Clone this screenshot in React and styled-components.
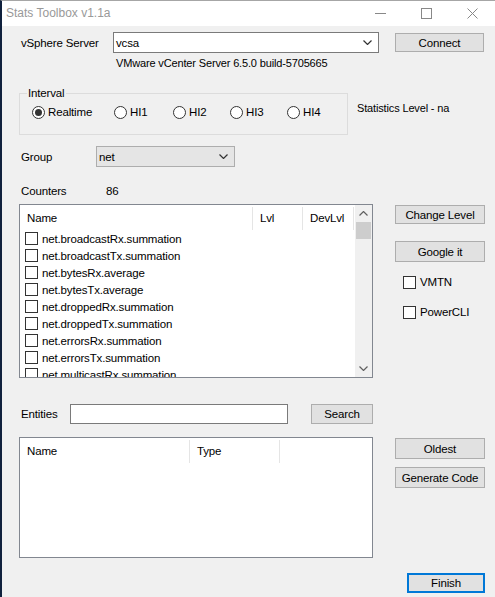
import React from "react";
import styled, { createGlobalStyle } from "styled-components";

const Global = createGlobalStyle`
  html, body { margin: 0; padding: 0; background: #f0f0f0; }
  body { font-family: "Liberation Sans", Arial, sans-serif; font-size: 11px; color: #000; }
  * { box-sizing: border-box; }
`;

const Window = styled.div`
  width: 495px;
  height: 597px;
  border-top: 1px solid #a6a6a6;
  border-left: 2px solid #10213d;
  background: #f0f0f0;
  display: flex;
  flex-direction: column;
  overflow: hidden;
  letter-spacing: -0.15px;
`;

const TitleBar = styled.div`
  height: 25px;
  background: #fff;
  display: flex;
  align-items: center;
  padding-left: 4px;
`;

const Title = styled.div`
  flex: 1;
  font-size: 12px;
  color: #999;
  letter-spacing: 0;
  padding-bottom: 1px;
`;

const WinBtn = styled.div`
  width: 46px;
  height: 25px;
  display: flex;
  align-items: center;
  justify-content: center;
`;

const Body = styled.div`
  flex: 1;
  display: flex;
  flex-direction: column;
  padding: 6px 10px 0 17px;
`;

const Row = styled.div`
  display: flex;
  align-items: ${(p) => p.$align || "center"};
  margin-top: ${(p) => p.$mt || 0}px;
`;

const Label = styled.div`
  width: ${(p) => p.$w}px;
  padding-left: 2px;
  line-height: 14px;
  flex-shrink: 0;
  font-size: 11.5px;
`;

const Combo = styled.div`
  width: ${(p) => p.$w}px;
  height: 21px;
  border: 1px solid ${(p) => (p.$flat ? "#adadad" : "#7a7a7a")};
  background: ${(p) => (p.$flat ? "#e5e5e5" : "#fff")};
  display: flex;
  align-items: center;
  padding: 0 6px 0 2px;
  font-size: 11.5px;
  flex-shrink: 0;
`;

const ComboText = styled.span`
  flex: 1;
`;

const TextBox = styled.div`
  width: ${(p) => p.$w}px;
  height: 20px;
  border: 1px solid #7a7a7a;
  background: #fff;
  flex-shrink: 0;
`;

const Button = styled.div`
  width: ${(p) => p.$w}px;
  height: ${(p) => p.$h || 20}px;
  margin-left: ${(p) => p.$ml || 0}px;
  margin-top: ${(p) => p.$mt || 0}px;
  background: #e1e1e1;
  border: ${(p) => (p.$default ? "2px solid #0078d7" : "1px solid #adadad")};
  display: flex;
  align-items: center;
  justify-content: center;
  font-size: 11.5px;
  flex-shrink: 0;
`;

const Version = styled.div`
  margin-top: 3px;
  padding-left: 97px;
  line-height: 14px;
  font-size: 11px;
`;

const GroupBox = styled.div`
  position: relative;
  width: 329px;
  height: 42px;
  border: 1px solid #dcdcdc;
  padding: 11px 0 0 12px;
  display: flex;
  align-items: flex-start;
`;

const GroupTitle = styled.div`
  position: absolute;
  top: -8px;
  left: 7px;
  padding: 0 1px;
  background: #f0f0f0;
  line-height: 14px;
  font-size: 11.5px;
`;

const Radio = styled.div`
  width: ${(p) => p.$w}px;
  height: 14px;
  display: flex;
  align-items: center;
  gap: 3px;
  line-height: 14px;
  font-size: 11.5px;
  flex-shrink: 0;
`;

const RadioCircle = styled.div`
  width: 13px;
  height: 13px;
  border-radius: 50%;
  border: 1px solid #333;
  background: #fff;
  display: flex;
  align-items: center;
  justify-content: center;
  &::after {
    content: "";
    display: ${(p) => (p.$checked ? "block" : "none")};
    width: 7px;
    height: 7px;
    border-radius: 50%;
    background: #333;
  }
`;

const StatLevel = styled.div`
  margin-left: 9px;
  margin-top: 8px;
  line-height: 14px;
  font-size: 11px;
`;

const Main = styled.div`
  display: flex;
  align-items: flex-start;
  margin-top: ${(p) => p.$mt || 0}px;
`;

const ListView = styled.div`
  width: 354px;
  height: ${(p) => p.$h}px;
  border: 1px solid #828790;
  background: #fff;
  display: flex;
  overflow: hidden;
  flex-shrink: 0;
`;

const ListInner = styled.div`
  flex: 1;
  display: flex;
  flex-direction: column;
  overflow: hidden;
`;

const Header = styled.div`
  height: 25px;
  display: flex;
  flex-shrink: 0;
`;

const HeadCell = styled.div`
  width: ${(p) => p.$w}px;
  padding-left: 7px;
  display: flex;
  align-items: center;
  font-size: 11.5px;
  position: relative;
  flex-shrink: 0;
  &::after {
    content: "";
    position: absolute;
    right: 0;
    top: 2px;
    bottom: 0;
    width: 1px;
    background: #e5e5e5;
  }
`;

const ItemRow = styled.div`
  height: 17px;
  display: flex;
  align-items: center;
  padding-left: 5px;
  gap: 4px;
  flex-shrink: 0;
  font-size: 11.5px;
`;

const Check = styled.div`
  width: 13px;
  height: 13px;
  border: 1px solid #333;
  background: #fff;
  flex-shrink: 0;
`;

const ScrollBar = styled.div`
  width: 17px;
  background: #f0f0f0;
  display: flex;
  flex-direction: column;
  flex-shrink: 0;
`;

const ScrollArrow = styled.div`
  height: 17px;
  display: flex;
  align-items: center;
  justify-content: center;
`;

const ScrollThumb = styled.div`
  height: 17px;
  margin: 0 1px;
  background: #cdcdcd;
`;

const ScrollTrack = styled.div`
  flex: 1;
`;

const Side = styled.div`
  display: flex;
  flex-direction: column;
  margin-left: 22px;
`;

const CheckOption = styled.div`
  display: flex;
  align-items: center;
  gap: 4px;
  margin-left: 8px;
  margin-top: ${(p) => p.$mt}px;
  line-height: 14px;
  font-size: 11.5px;
`;

const Footer = styled.div`
  display: flex;
  justify-content: flex-end;
  margin-top: 15px;
`;

const Chevron = ({ down = true, color = "#333" }) => (
  <svg width="9" height="5" viewBox="0 0 9 5">
    <polyline
      points={down ? "0.5,0.5 4.5,4.5 8.5,0.5" : "0.5,4.5 4.5,0.5 8.5,4.5"}
      fill="none"
      stroke={color}
      strokeWidth="1.2"
    />
  </svg>
);

const counters = [
  "net.broadcastRx.summation",
  "net.broadcastTx.summation",
  "net.bytesRx.average",
  "net.bytesTx.average",
  "net.droppedRx.summation",
  "net.droppedTx.summation",
  "net.errorsRx.summation",
  "net.errorsTx.summation",
  "net.multicastRx.summation",
];

export default function App() {
  return (
    <>
      <Global />
      <Window>
        <TitleBar>
          <Title>Stats Toolbox v1.1a</Title>
          <WinBtn>
            <svg width="11" height="1"><rect width="11" height="1" fill="#888" /></svg>
          </WinBtn>
          <WinBtn>
            <svg width="11" height="11"><rect x="0.5" y="0.5" width="10" height="10" fill="none" stroke="#888" /></svg>
          </WinBtn>
          <WinBtn>
            <svg width="11" height="11"><path d="M0.5 0.5 L10.5 10.5 M10.5 0.5 L0.5 10.5" stroke="#888" /></svg>
          </WinBtn>
        </TitleBar>
        <Body>
          <Row>
            <Label $w={94}>vSphere Server</Label>
            <Combo $w={266}>
              <ComboText>vcsa</ComboText>
              <Chevron />
            </Combo>
            <Button $w={89} $h={19} $ml={16}>Connect</Button>
          </Row>
          <Version>VMware vCenter Server 6.5.0 build-5705665</Version>
          <Main $mt={23}>
            <GroupBox>
              <GroupTitle>Interval</GroupTitle>
              <Radio $w={82}><RadioCircle $checked />Realtime</Radio>
              <Radio $w={59}><RadioCircle />HI1</Radio>
              <Radio $w={57}><RadioCircle />HI2</Radio>
              <Radio $w={57}><RadioCircle />HI3</Radio>
              <Radio $w={60}><RadioCircle />HI4</Radio>
            </GroupBox>
            <StatLevel>Statistics Level - na</StatLevel>
          </Main>
          <Row $mt={11}>
            <Label $w={77}>Group</Label>
            <Combo $w={139} $flat>
              <ComboText>net</ComboText>
              <Chevron />
            </Combo>
          </Row>
          <Row $mt={17}>
            <Label $w={85}>Counters</Label>
            <Label $w={40}>86</Label>
          </Row>
          <Main $mt={6}>
            <ListView $h={174}>
              <ListInner>
                <Header>
                  <HeadCell $w={233}>Name</HeadCell>
                  <HeadCell $w={50}>Lvl</HeadCell>
                  <HeadCell $w={51}>DevLvl</HeadCell>
                </Header>
                {counters.map((c) => (
                  <ItemRow key={c}>
                    <Check />
                    {c}
                  </ItemRow>
                ))}
              </ListInner>
              <ScrollBar>
                <ScrollArrow><Chevron down={false} color="#606060" /></ScrollArrow>
                <ScrollThumb />
                <ScrollTrack />
                <ScrollArrow><Chevron color="#606060" /></ScrollArrow>
              </ScrollBar>
            </ListView>
            <Side>
              <Button $w={90} $h={19} $mt={1}>Change Level</Button>
              <Button $w={90} $h={21} $mt={17}>Google it</Button>
              <CheckOption $mt={13}><Check />VMTN</CheckOption>
              <CheckOption $mt={16}><Check />PowerCLI</CheckOption>
            </Side>
          </Main>
          <Row $mt={26}>
            <Label $w={51}>Entities</Label>
            <TextBox $w={218} />
            <Button $w={62} $h={20} $ml={23}>Search</Button>
          </Row>
          <Main $mt={13}>
            <ListView $h={121}>
              <ListInner>
                <Header>
                  <HeadCell $w={170}>Name</HeadCell>
                  <HeadCell $w={90}>Type</HeadCell>
                </Header>
              </ListInner>
            </ListView>
            <Side>
              <Button $w={90} $h={21} $mt={1}>Oldest</Button>
              <Button $w={90} $h={21} $mt={8}>Generate Code</Button>
            </Side>
          </Main>
          <Footer>
            <Button $w={78} $h={20} $default>Finish</Button>
          </Footer>
        </Body>
      </Window>
    </>
  );
}
